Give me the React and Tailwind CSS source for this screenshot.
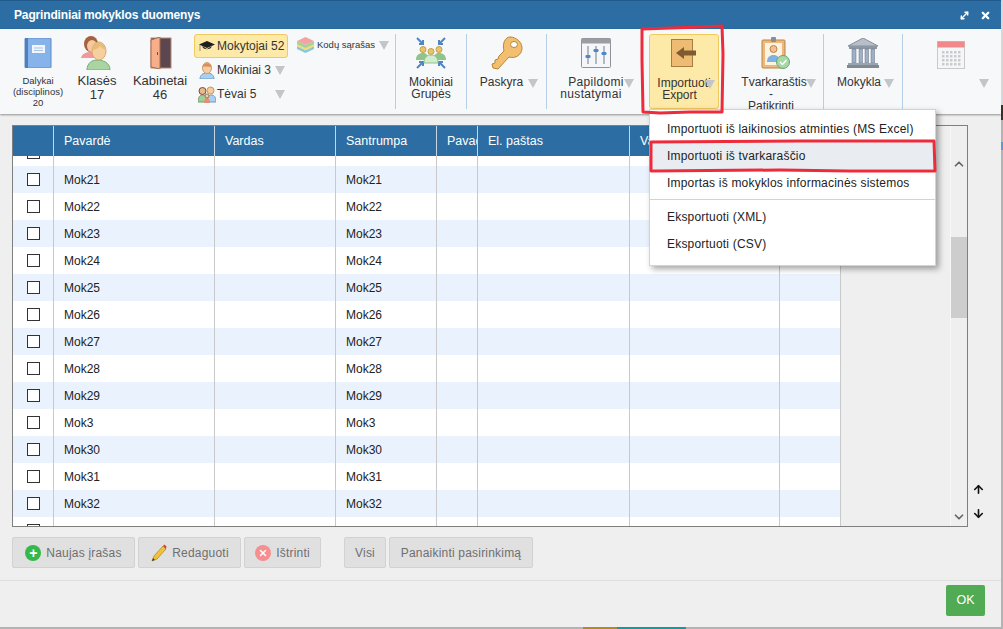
import { ChevronUp, ChevronDown, ArrowUp, ArrowDown, X, MoveDiagonal } from "lucide-react";

const rows = ["Mok21", "Mok22", "Mok23", "Mok24", "Mok25", "Mok26", "Mok27", "Mok28", "Mok29", "Mok3", "Mok30", "Mok31", "Mok32"];

const colWidths = ["w-[41px]", "w-[161px]", "w-[121px]", "w-[101px]", "w-[41px]", "w-[152px]", "w-[150px]", "w-[61px]"];

const Tri = ({ className = "" }) => (
  <span className={`inline-block w-0 h-0 border-x-[5px] border-x-transparent border-t-[9px] border-t-[#c3c6c9] ${className}`} />
);

const Sep = () => <div className="w-px self-stretch my-[5px] bg-[#b5d0e6] shrink-0" />;

function BookIcon() {
  return (
    <svg width="28" height="30" viewBox="0 0 28 30">
      <rect x="1" y="0" width="26" height="30" rx="1" fill="#86b4ea" stroke="#5d8ac4" />
      <rect x="1" y="0" width="3" height="30" fill="#4f7fbd" />
      <rect x="8" y="7" width="13" height="8" fill="#f2f5fa" />
      <path d="M10 10h9M10 12.5h9" stroke="#a9c3e4" />
    </svg>
  );
}

function PeopleIcon() {
  return (
    <svg width="32" height="34" viewBox="0 0 32 34">
      <path d="M0 22c1-5 6-6 10-6s8 2 9 6H0z" fill="#f0989c" />
      <ellipse cx="10" cy="8" rx="7" ry="8" fill="#a5603c" />
      <ellipse cx="11" cy="10" rx="5" ry="6" fill="#f3c9a0" />
      <path d="M6 34c0-7 5-10 10-10s13 2 13 10z" fill="#a8d5a2" stroke="#7ba67a" />
      <ellipse cx="18" cy="15" rx="7" ry="9" fill="#f6cf9f" stroke="#d7a96a" />
      <path d="M11 14c1-6 4-7 7-7s6 2 7 7c-3-1-5-3-6-4-1 2-5 4-8 4z" fill="#e9bb7a" />
    </svg>
  );
}

function DoorIcon() {
  return (
    <svg width="24" height="32" viewBox="0 0 24 32">
      <rect x="3" y="1" width="20" height="30" fill="#5c4650" stroke="#b38975" />
      <path d="M3 3l9-3v32l-9-2z" fill="#f6ae8b" stroke="#a56c4f" />
      <rect x="9" y="15" width="1" height="3" fill="#7a4a30" />
    </svg>
  );
}

function CapIcon() {
  return (
    <svg width="16" height="12" viewBox="0 0 16 12">
      <path d="M8 1l8 3.500L8 8 0 4.500z" fill="#1e1e1e" />
      <path d="M3.500 7c1 3 8 3 9 0v-1L8 9 3.500 6z" fill="#333" />
      <path d="M1 5v6" stroke="#a58a5a" />
    </svg>
  );
}

function PupilIcon() {
  return (
    <svg width="16" height="17" viewBox="0 0 16 17">
      <path d="M1 17c0-4 3-6 7-6s7 2 7 6z" fill="#a9d0ee" stroke="#6e9cc2" />
      <ellipse cx="8" cy="6" rx="4.500" ry="5.500" fill="#f6cda3" stroke="#d19c6d" />
      <path d="M3.500 5c1-5 8-5 9 0-3 0-6-1-9 0z" fill="#d98f5a" />
    </svg>
  );
}

function ParentsIcon() {
  return (
    <svg width="18" height="17" viewBox="0 0 18 17">
      <path d="M0 16c0-5 2-7 4.500-7S9 11 9 16z" fill="#9ccf9a" stroke="#6e9e6c" />
      <path d="M9 16c0-5 2-7 4.500-7S18 11 18 16z" fill="#a9d0ee" stroke="#6e9cc2" />
      <circle cx="4.500" cy="5" r="3.500" fill="#e9b98c" stroke="#7a4a30" />
      <circle cx="12.500" cy="4.500" r="3.500" fill="#f4cb9b" stroke="#c79a5a" />
      <path d="M6 17c0-3 1-5 3-5s3 2 3 5z" fill="#e58c7b" />
      <circle cx="9" cy="10" r="2" fill="#f6cda3" stroke="#a4744a" />
    </svg>
  );
}

function StackIcon() {
  return (
    <svg width="17" height="16" viewBox="0 0 17 16">
      <path d="M0 9l8.500 4 8.500-4v3l-8.500 4L0 12z" fill="#84c8dd" />
      <path d="M0 6.500l8.500 4 8.500-4v3l-8.500 4L0 9.500z" fill="#f1dc7c" />
      <path d="M0 4l8.500 4L17 4v3l-8.500 4L0 7z" fill="#9fd39a" />
      <path d="M8.500 0L17 4 8.500 8 0 4z" fill="#f3a3a3" />
    </svg>
  );
}

function GroupIcon() {
  return (
    <svg width="32" height="32" viewBox="0 0 32 32">
      <g stroke="#4e86c6" strokeWidth="2" fill="none">
        <path d="M2 1l6 6M8 3v4H4M30 1l-6 6M24 3v4h4M2 31l6-6M8 29v-4H4M30 31l-6-6M24 29v-4h4" />
      </g>
      <circle cx="8" cy="12.500" r="3" fill="#e9c568" stroke="#c39f45" />
      <circle cx="24" cy="12.500" r="3" fill="#e9c568" stroke="#c39f45" />
      <circle cx="16" cy="14.500" r="3" fill="#e9c568" stroke="#c39f45" />
      <path d="M1 23c0-5 3-7 7-7s5 2 5 7zM19 23c0-5 1-7 5-7s7 2 7 7z" fill="#8fc48a" />
      <path d="M9 26c0-6 3-8 7-8s7 2 7 8z" fill="#d3ecd0" stroke="#8fc48a" />
    </svg>
  );
}

function KeyIcon() {
  return (
    <svg width="32" height="34" viewBox="0 0 32 34">
      <path d="M19 1c6 0 12 5 12 11 0 7-7 11-13 9L7 33l-5-1-1-4 3-1 0-3 3-1 1-3 5-5c-2-7 1-14 6-14z" fill="#f2bf70" stroke="#b78638" />
      <ellipse cx="23" cy="8.500" rx="3.500" ry="3" fill="#fff" stroke="#b78638" />
    </svg>
  );
}

function SlidersIcon() {
  return (
    <svg width="30" height="30" viewBox="0 0 30 30">
      <rect x="0.500" y="0.500" width="29" height="29" rx="1" fill="#f4f6f9" stroke="#8e9297" />
      <rect x="0.500" y="0.500" width="29" height="5" fill="#9a9ea3" />
      <path d="M7 8v18M15 8v18M23 8v18" stroke="#6f7c88" />
      <rect x="4.500" y="17" width="5" height="3" rx="1" fill="#4e86c6" />
      <rect x="12.500" y="11" width="5" height="3" rx="1" fill="#4e86c6" />
      <rect x="20.500" y="14" width="5" height="3" rx="1" fill="#4e86c6" />
    </svg>
  );
}

function ImportIcon() {
  return (
    <svg width="26" height="28" viewBox="0 0 26 28">
      <rect x="0.500" y="0.500" width="21" height="27" fill="#edbc72" stroke="#a67c42" />
      <path d="M5 14l8-6v3.500h12v5H13V20z" fill="#7e5c30" />
    </svg>
  );
}

function ClipboardIcon() {
  return (
    <svg width="29" height="32" viewBox="0 0 29 32">
      <rect x="1" y="3" width="23" height="28" rx="1" fill="#f0b878" stroke="#b9854a" />
      <rect x="4" y="6" width="17" height="22" fill="#fbf4e6" />
      <rect x="10" y="0" width="5" height="5" rx="1" fill="#8a8f96" />
      <circle cx="12.500" cy="12" r="3.500" fill="#f0c090" stroke="#b9854a" />
      <path d="M6 25c0-5 3-7 6.500-7s6.500 2 6.500 7z" fill="#7fb2e0" />
      <circle cx="22" cy="25" r="6.500" fill="#a6d8a6" stroke="#6aa56a" />
      <path d="M19 25l2.500 2.500 4-4.500" stroke="#fff" strokeWidth="1.500" fill="none" />
    </svg>
  );
}

function BankIcon() {
  return (
    <svg width="32" height="30" viewBox="0 0 32 30">
      <path d="M16 0l15 8H1z" fill="#b7bfc9" stroke="#87909b" />
      <rect x="2" y="8" width="28" height="3" fill="#8d97a3" />
      <path d="M5 11h4v14H5zM12 11h3.500v14H12zM18 11h3.500v14H18zM24 11h3.500v14H24z" fill="#9db0c8" stroke="#6a7480" strokeWidth="0.500" />
      <rect x="1" y="25" width="30" height="2" fill="#9aa3ae" />
      <rect x="0" y="27" width="32" height="3" fill="#7f8893" />
    </svg>
  );
}

function CalendarIcon() {
  return (
    <svg width="28" height="28" viewBox="0 0 28 28">
      <rect x="0.500" y="0.500" width="27" height="27" fill="#f6f6f6" stroke="#c9c9c9" />
      <rect x="0.500" y="0.500" width="27" height="6" fill="#f08a8a" />
      <g fill="#c8ccd2">
        {[10, 14, 18, 22].map((y) =>
          [5, 9, 13, 17, 21].map((x) => <rect key={`${x}-${y}`} x={x} y={y} width="2.500" height="2.500" />)
        )}
      </g>
    </svg>
  );
}

function PencilIcon() {
  return (
    <svg width="17" height="18" viewBox="0 0 17 18">
      <path d="M4 12L13 2l3 3-9 10-5 2z" fill="#f0c23c" stroke="#a88320" strokeWidth="0.700" />
      <path d="M13 2l1.500-1.500 2 2L16 5z" fill="#d8404a" />
      <path d="M2 17l1-3 2 2z" fill="#444" />
    </svg>
  );
}

// lines: [text, extra class for that line]
function ToolItem({ icon, lines, width, tri, small, iconClass = "", textClass = "text-[12px] leading-[12px] mt-[5px]" }) {
  return (
    <div className={`relative flex flex-col items-center shrink-0 pt-[6px] ${width}`}>
      <div className={`h-[36px] flex items-center justify-center ${iconClass}`}>{icon}</div>
      <div className={`text-center text-[#333] ${small ? "text-[9.5px] leading-[11px] mt-[4px]" : textClass}`}>
        {lines.map(([text, cls]) => <div key={text} className={cls}>{text}</div>)}
      </div>
      {tri}
    </div>
  );
}

function SmallItem({ icon, label, tri, active }) {
  return (
    <div className={`flex items-center h-[24px] w-[94px] rounded-[3px] pl-[3px] text-[12px] text-[#333] border ${active ? "bg-[#fdeaa8] border-[#f0c95f]" : "border-transparent"}`}>
      <span className="w-[18px] flex justify-center shrink-0">{icon}</span>
      <span className="ml-[1px] whitespace-nowrap">{label}</span>
      {tri && <Tri className="ml-auto mr-[2px]" />}
    </div>
  );
}

function MenuItem({ children, active }) {
  return (
    <div className={`h-[27px] flex items-center pl-[17px] text-[12px] tracking-[0.2px] text-[#222] whitespace-nowrap ${active ? "bg-[#e9edf2]" : ""}`}>
      {children}
    </div>
  );
}

function GreyBtn({ children, width }) {
  return (
    <button className={`h-[31px] ${width} shrink-0 flex items-center justify-center gap-[5px] rounded-[2px] border border-[#d2d2d2] bg-[#e0e0e0] text-[12px] tracking-[0.2px] text-[#6f6f6f]`}>
      {children}
    </button>
  );
}

function Row({ name, striped, top }) {
  const bg = striped ? "bg-[#eaf3fd]" : "bg-white";
  return (
    <div className={`flex h-[27px] shrink-0 ${bg} text-[12px] text-[#222]`}>
      {colWidths.map((w, i) => (
        <div key={i} className={`${w} shrink-0 flex items-center border-r border-[#c9c9c9] ${i === 0 ? "justify-center" : "pl-[10px]"}`}>
          {i === 0 && <span className="w-[13px] h-[13px] border border-[#333] bg-white" />}
          {(i === 1 || i === 3) && !top && name}
        </div>
      ))}
    </div>
  );
}

export default function App() {
  const heads = ["", "Pavardė", "Vardas", "Santrumpa", "Pavad", "El. paštas", "Va", ""];

  return (
    <div className="relative w-[1003px] h-[629px] overflow-hidden bg-[#b3b3b3] font-['Liberation_Sans',Arial,sans-serif] flex flex-col">
      <div className="flex h-[627px] shrink-0">
        <div className="w-[1001px] h-[627px] shrink-0 flex flex-col bg-[#efefef]">
          {/* Title */}
          <div className="h-[29px] shrink-0 flex items-center justify-between bg-[#2c6ea3] border-t border-[#1f5a8a] pl-[14px] pr-[10px]">
            <span className="text-[12px] font-bold tracking-[-0.15px] text-white">Pagrindiniai mokyklos duomenys</span>
            <div className="flex items-center gap-[10px] text-white">
              <MoveDiagonal size={11} strokeWidth={3} />
              <X size={11} strokeWidth={5} />
            </div>
          </div>

          {/* Toolbar */}
          <div className="h-[85px] shrink-0 flex bg-[#f7f8fa] shadow-[0_1px_2px_rgba(0,0,0,0.4)]">
            <ToolItem width="w-[52px] ml-[12px]" small icon={<BookIcon />} lines={[["Dalykai"], ["(disciplinos)"], ["20"]]} />
            <ToolItem width="w-[54px] ml-[6px]" textClass="text-[13px] leading-[14px] mt-[3px]" icon={<PeopleIcon />} lines={[["Klasės"], ["17"]]} />
            <ToolItem width="w-[60px] ml-[6px]" textClass="text-[13px] leading-[14px] mt-[3px]" icon={<DoorIcon />} lines={[["Kabinetai"], ["46"]]} />
            <div className="ml-[4px] w-[100px] shrink-0 pt-[5px] flex flex-col">
              <SmallItem active icon={<CapIcon />} label="Mokytojai 52" />
              <SmallItem icon={<PupilIcon />} label="Mokiniai 3" tri />
              <SmallItem icon={<ParentsIcon />} label="Tėvai 5" tri />
            </div>
            <div className="w-[101px] shrink-0 pt-[8px] flex items-start">
              <div className="flex items-center gap-[3px] text-[9.5px] text-[#333] whitespace-nowrap ml-[3px]">
                <StackIcon />
                <span>Kodų sąrašas</span>
                <Tri className="ml-[1px]" />
              </div>
            </div>
            <Sep />
            <ToolItem width="w-[70px]" icon={<GroupIcon />} lines={[["Mokiniai"], ["Grupės"]]} />
            <Sep />
            <ToolItem width="w-[79px]" icon={<KeyIcon />} lines={[["Paskyra", "pr-[10px]"]]} tri={<Tri className="absolute right-[8px] top-[50px]" />} />
            <Sep />
            <ToolItem width="w-[98px]" icon={<SlidersIcon />} lines={[["Papildomi", "tracking-[0.3px]"], ["nustatymai", "tracking-[0.35px] pr-[10px]"]]} tri={<Tri className="absolute right-[11px] top-[50px]" />} />
            <div className="relative w-[70px] shrink-0 ml-[4px] mt-[5px] h-[75px] rounded-[3px] bg-[#fdeaa8] border border-[#f0c95f] flex flex-col items-center">
              <div className="h-[36px] flex items-center"><ImportIcon /></div>
              <div className="text-[12px] leading-[12px] text-[#333] text-center mt-[6px]">
                <div>Importuoti</div>
                <div className="pr-[9px]">Export</div>
              </div>
              <Tri className="absolute right-[3px] top-[45px]" />
            </div>
            <ToolItem width="w-[104px]" iconClass="ml-[9px]" icon={<ClipboardIcon />} lines={[["Tvarkaraštis", "ml-[6px]"], ["-"], ["Patikrinti"]]} tri={<Tri className="absolute right-[7px] top-[50px]" />} />
            <Sep />
            <ToolItem width="w-[78px]" icon={<BankIcon />} lines={[["Mokykla", "pr-[8px]"]]} tri={<Tri className="absolute right-[8px] top-[50px]" />} />
            <Sep />
            <div className="relative flex-1 flex justify-center pt-[12px] pr-[2px]">
              <CalendarIcon />
              <Tri className="absolute right-[12px] top-[50px]" />
            </div>
          </div>

          {/* Table */}
          <div className="flex-1 flex flex-col px-[12px] pt-[11px] min-h-0">
            <div className="flex items-stretch">
              <div className="w-[956px] h-[402px] shrink-0 flex border border-[#7f7f7f] overflow-hidden">
                <div className="w-[828px] shrink-0 flex flex-col overflow-hidden">
                  <div className="flex h-[30px] shrink-0 bg-[#2c6ea3] text-[12.5px] text-white">
                    {heads.map((h, i) => (
                      <div key={i} className={`${colWidths[i]} shrink-0 flex items-center pl-[10px] overflow-hidden whitespace-nowrap border-r border-[#c9d6e2]`}>{h}</div>
                    ))}
                  </div>
                  <div className="h-[10px] overflow-hidden shrink-0 flex flex-col justify-end">
                    <Row top />
                  </div>
                  {rows.map((r, i) => <Row key={r} name={r} striped={i % 2 === 0} />)}
                  <Row top />
                </div>
                <div className="flex-1" />
                <div className="w-[17px] shrink-0 flex flex-col items-center border-l border-[#f7f7f7] pt-[30px] pb-[2px]">
                  <ChevronUp size={14} strokeWidth={3} className="text-[#666] mt-[1px]" />
                  <div className="w-full h-[81px] bg-[#cdcdcd] mt-[66px]" />
                  <ChevronDown size={14} strokeWidth={3} className="text-[#666] mt-auto" />
                </div>
              </div>
              <div className="flex flex-col items-center justify-end gap-[11px] ml-[2px] pb-[7px] w-[16px] text-[#111]">
                <ArrowUp size={13} strokeWidth={3} />
                <ArrowDown size={13} strokeWidth={3} />
              </div>
            </div>

            {/* Buttons */}
            <div className="flex mt-[10px] gap-[3px]">
              <GreyBtn width="w-[123px]">
                <span className="w-[16px] h-[16px] rounded-full bg-[#35b84b] text-white flex items-center justify-center text-[14px] font-bold leading-none">+</span>
                Naujas įrašas
              </GreyBtn>
              <GreyBtn width="w-[103px]"><PencilIcon />Redaguoti</GreyBtn>
              <GreyBtn width="w-[77px]">
                <span className="w-[16px] h-[16px] rounded-full bg-[#f58f92] text-white flex items-center justify-center"><X size={10} strokeWidth={3.5} /></span>
                Ištrinti
              </GreyBtn>
              <div className="w-[17px]" />
              <GreyBtn width="w-[42px]">Visi</GreyBtn>
              <GreyBtn width="w-[144px]">Panaikinti pasirinkimą</GreyBtn>
            </div>
          </div>

          {/* Footer */}
          <div className="h-[47px] shrink-0 flex items-start justify-end border-t border-[#dedede] pt-[4px] pr-[16px]">
            <button className="w-[39px] h-[31px] rounded-[2px] bg-[#51ab54] text-white text-[12.5px]">OK</button>
          </div>
        </div>

        {/* Page behind the dialog, right edge */}
        <div className="flex-1 flex flex-col">
          <div className="h-[105px] bg-[#d8d8d8]" />
          <div className="h-[15px] bg-[#3a3226]" />
          <div className="h-[22px] bg-[#b3b3b3]" />
          <div className="h-[8px] bg-[#5b9bd5]" />
        </div>
      </div>

      {/* Page behind the dialog, bottom edge */}
      <div className="flex-1 flex pl-[583px]">
        <div className="w-[34px] bg-[#b38a22]" />
        <div className="w-[69px] bg-[#129c9c]" />
      </div>

      {/* Dropdown */}
      <div className="absolute left-[649px] top-[109px] w-[287px] h-[157px] bg-white border border-[#c5d6e6] shadow-[3px_3px_6px_rgba(0,0,0,0.35)] pt-[5px]">
        <MenuItem>Importuoti iš laikinosios atminties (MS Excel)</MenuItem>
        <MenuItem active>Importuoti iš tvarkaraščio</MenuItem>
        <MenuItem>Importas iš mokyklos informacinės sistemos</MenuItem>
        <div className="h-px bg-[#c5d6e6] mt-[3px] mb-[3px]" />
        <MenuItem>Eksportuoti (XML)</MenuItem>
        <MenuItem>Eksportuoti (CSV)</MenuItem>
      </div>

      {/* Red marker strokes drawn over the screenshot */}
      <svg className="absolute left-0 top-0 pointer-events-none" width="1003" height="629" fill="none" stroke="#ee2b3b" strokeWidth="3" strokeLinecap="round" strokeLinejoin="round">
        <path d="M642 29L700 27L722 26L723 54L722 112L690 112L660 113L643 112L642 60Z" />
        <path d="M651 142L800 141L934 141L935 171L850 171L780 170L651 171Z" />
      </svg>
    </div>
  );
}
